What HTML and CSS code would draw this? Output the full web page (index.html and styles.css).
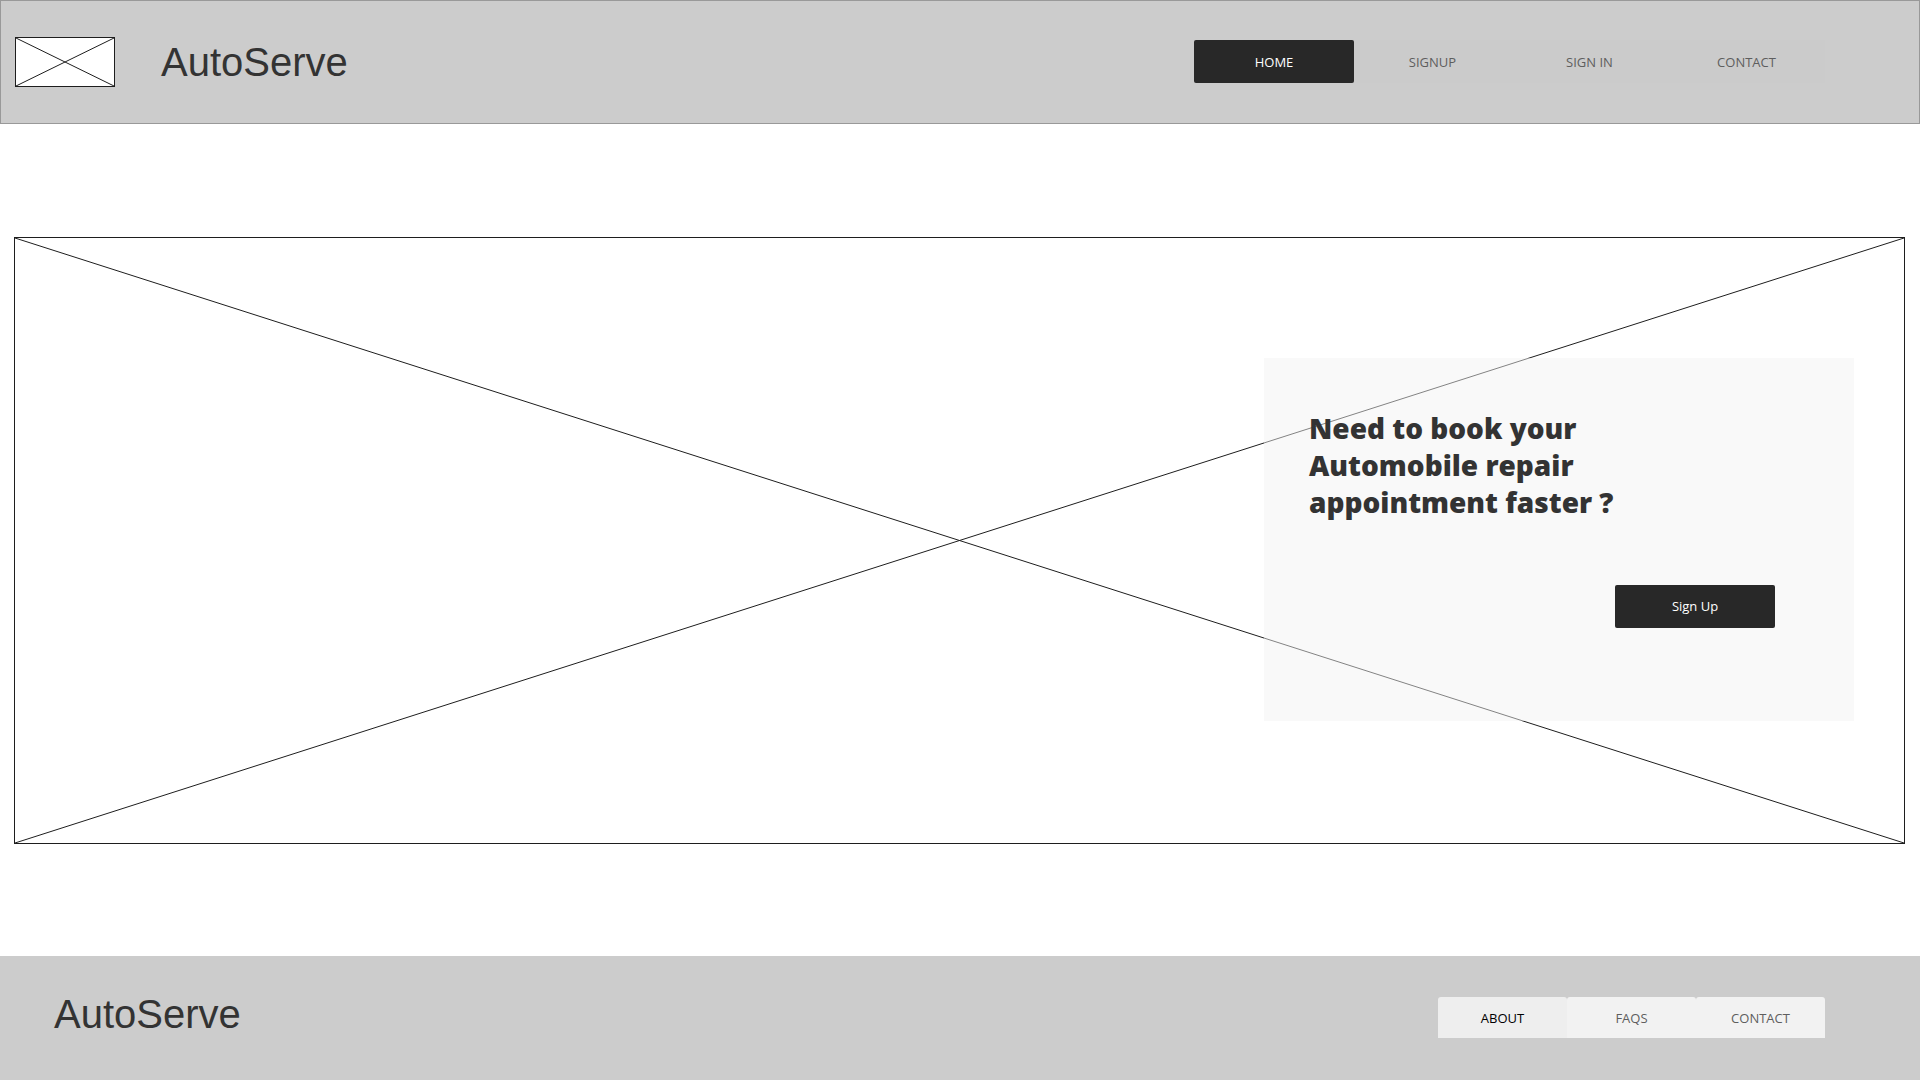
FILE: index.html
```html
<!DOCTYPE html>
<html lang="en">
<head>
  <meta charset="utf-8">
  <meta name="viewport" content="width=device-width, initial-scale=1">
  <title>AutoServe</title>
  <link rel="stylesheet" href="styles.css">
</head>
<body>
  <header class="site-header">
    <svg class="placeholder logo" aria-hidden="true">
      <line x1="0" y1="0" x2="100%" y2="100%"/>
      <line x1="0" y1="100%" x2="100%" y2="0"/>
    </svg>
    <h1 class="brand">AutoServe</h1>
    <nav class="main-nav" aria-label="Main">
      <a class="nav-link nav-link-active" href="#" aria-current="page">HOME</a>
      <a class="nav-link" href="#signup">SIGNUP</a>
      <a class="nav-link" href="#signin">SIGN IN</a>
      <a class="nav-link" href="#contact">CONTACT</a>
    </nav>
  </header>

  <main class="content">
    <section class="hero">
      <svg class="placeholder hero-image" aria-hidden="true">
        <line x1="0" y1="0" x2="100%" y2="100%"/>
        <line x1="0" y1="100%" x2="100%" y2="0"/>
      </svg>
      <div class="card">
        <h2 class="card-title">Need to book your<br>Automobile repair<br>appointment faster ?</h2>
        <button class="button" type="button">Sign Up</button>
      </div>
    </section>
  </main>

  <footer class="site-footer">
    <p class="brand">AutoServe</p>
    <nav class="tabs" aria-label="Footer">
      <a class="tab tab-active" href="#about">ABOUT</a>
      <a class="tab" href="#faqs">FAQS</a>
      <a class="tab" href="#contact">CONTACT</a>
    </nav>
  </footer>
</body>
</html>
```

FILE: styles.css
```css
* {
  box-sizing: border-box;
}

body {
  display: flex;
  flex-direction: column;
  min-height: 100vh;
  margin: 0;
  background: #fff;
  color: #333;
  font-family: "Open Sans", sans-serif;
  font-size: 13px;
}

.brand {
  margin: 0;
  font-family: "Liberation Sans", Arial, sans-serif;
  font-size: 40px;
  font-weight: 400;
  line-height: 44px;
}

/* Crossed box standing in for an image */
.placeholder {
  display: block;
  border: 1px solid #1e1e1e;
  background: #fff;
  stroke: #1e1e1e;
  stroke-width: 1px;
}

.site-header {
  display: flex;
  align-items: center;
  padding: 36px 94px 36px 14px;
  border: 1px solid #999;
  background: #ccc;
}

.logo {
  width: 100px;
  height: 50px;
  margin-right: 46px;
}

.main-nav {
  display: flex;
  margin-bottom: 1px;
  margin-left: auto;
  background: #cbcbcb;
}

.nav-link {
  width: 157px;
  height: 43px;
  color: #5e5e5e;
  line-height: 44px;
  text-align: center;
  text-decoration: none;
}

.nav-link-active,
.button {
  width: 160px;
  border-radius: 2px;
  background: #282828;
  color: #fff;
}

.content {
  display: flex;
  flex: 1;
  flex-direction: column;
  justify-content: center;
  padding: 32px 15px 32px 14px;
}

.hero {
  position: relative;
  display: flex;
  justify-content: flex-end;
  padding: 121px 51px 123px;
}

.hero-image {
  position: absolute;
  inset: 0;
  width: 100%;
  height: 100%;
}

.card {
  position: relative;
  display: flex;
  flex-direction: column;
  gap: 64px;
  width: 590px;
  padding: 52px 79px 93px 45px;
  background: rgba(242, 242, 242, 0.48);
}

.card-title {
  margin: 0;
  font-family: "Arial Black", "Open Sans", sans-serif;
  font-size: 28px;
  font-weight: 900;
  line-height: 37px;
}

.button {
  align-self: flex-end;
  height: 43px;
  padding: 0;
  border: 0;
  font: inherit;
}

.site-footer {
  display: flex;
  align-items: flex-start;
  justify-content: space-between;
  padding: 36px 95px 42px 54px;
  background: #ccc;
}

.tabs {
  display: flex;
  margin-top: 5px;
}

.tab {
  width: 129px;
  height: 41px;
  border-radius: 3px 3px 0 0;
  background: #f2f2f2;
  color: #5e5e5e;
  line-height: 42px;
  text-align: center;
  text-decoration: none;
}

.tab-active {
  background: #eee;
  color: #000;
}
```
